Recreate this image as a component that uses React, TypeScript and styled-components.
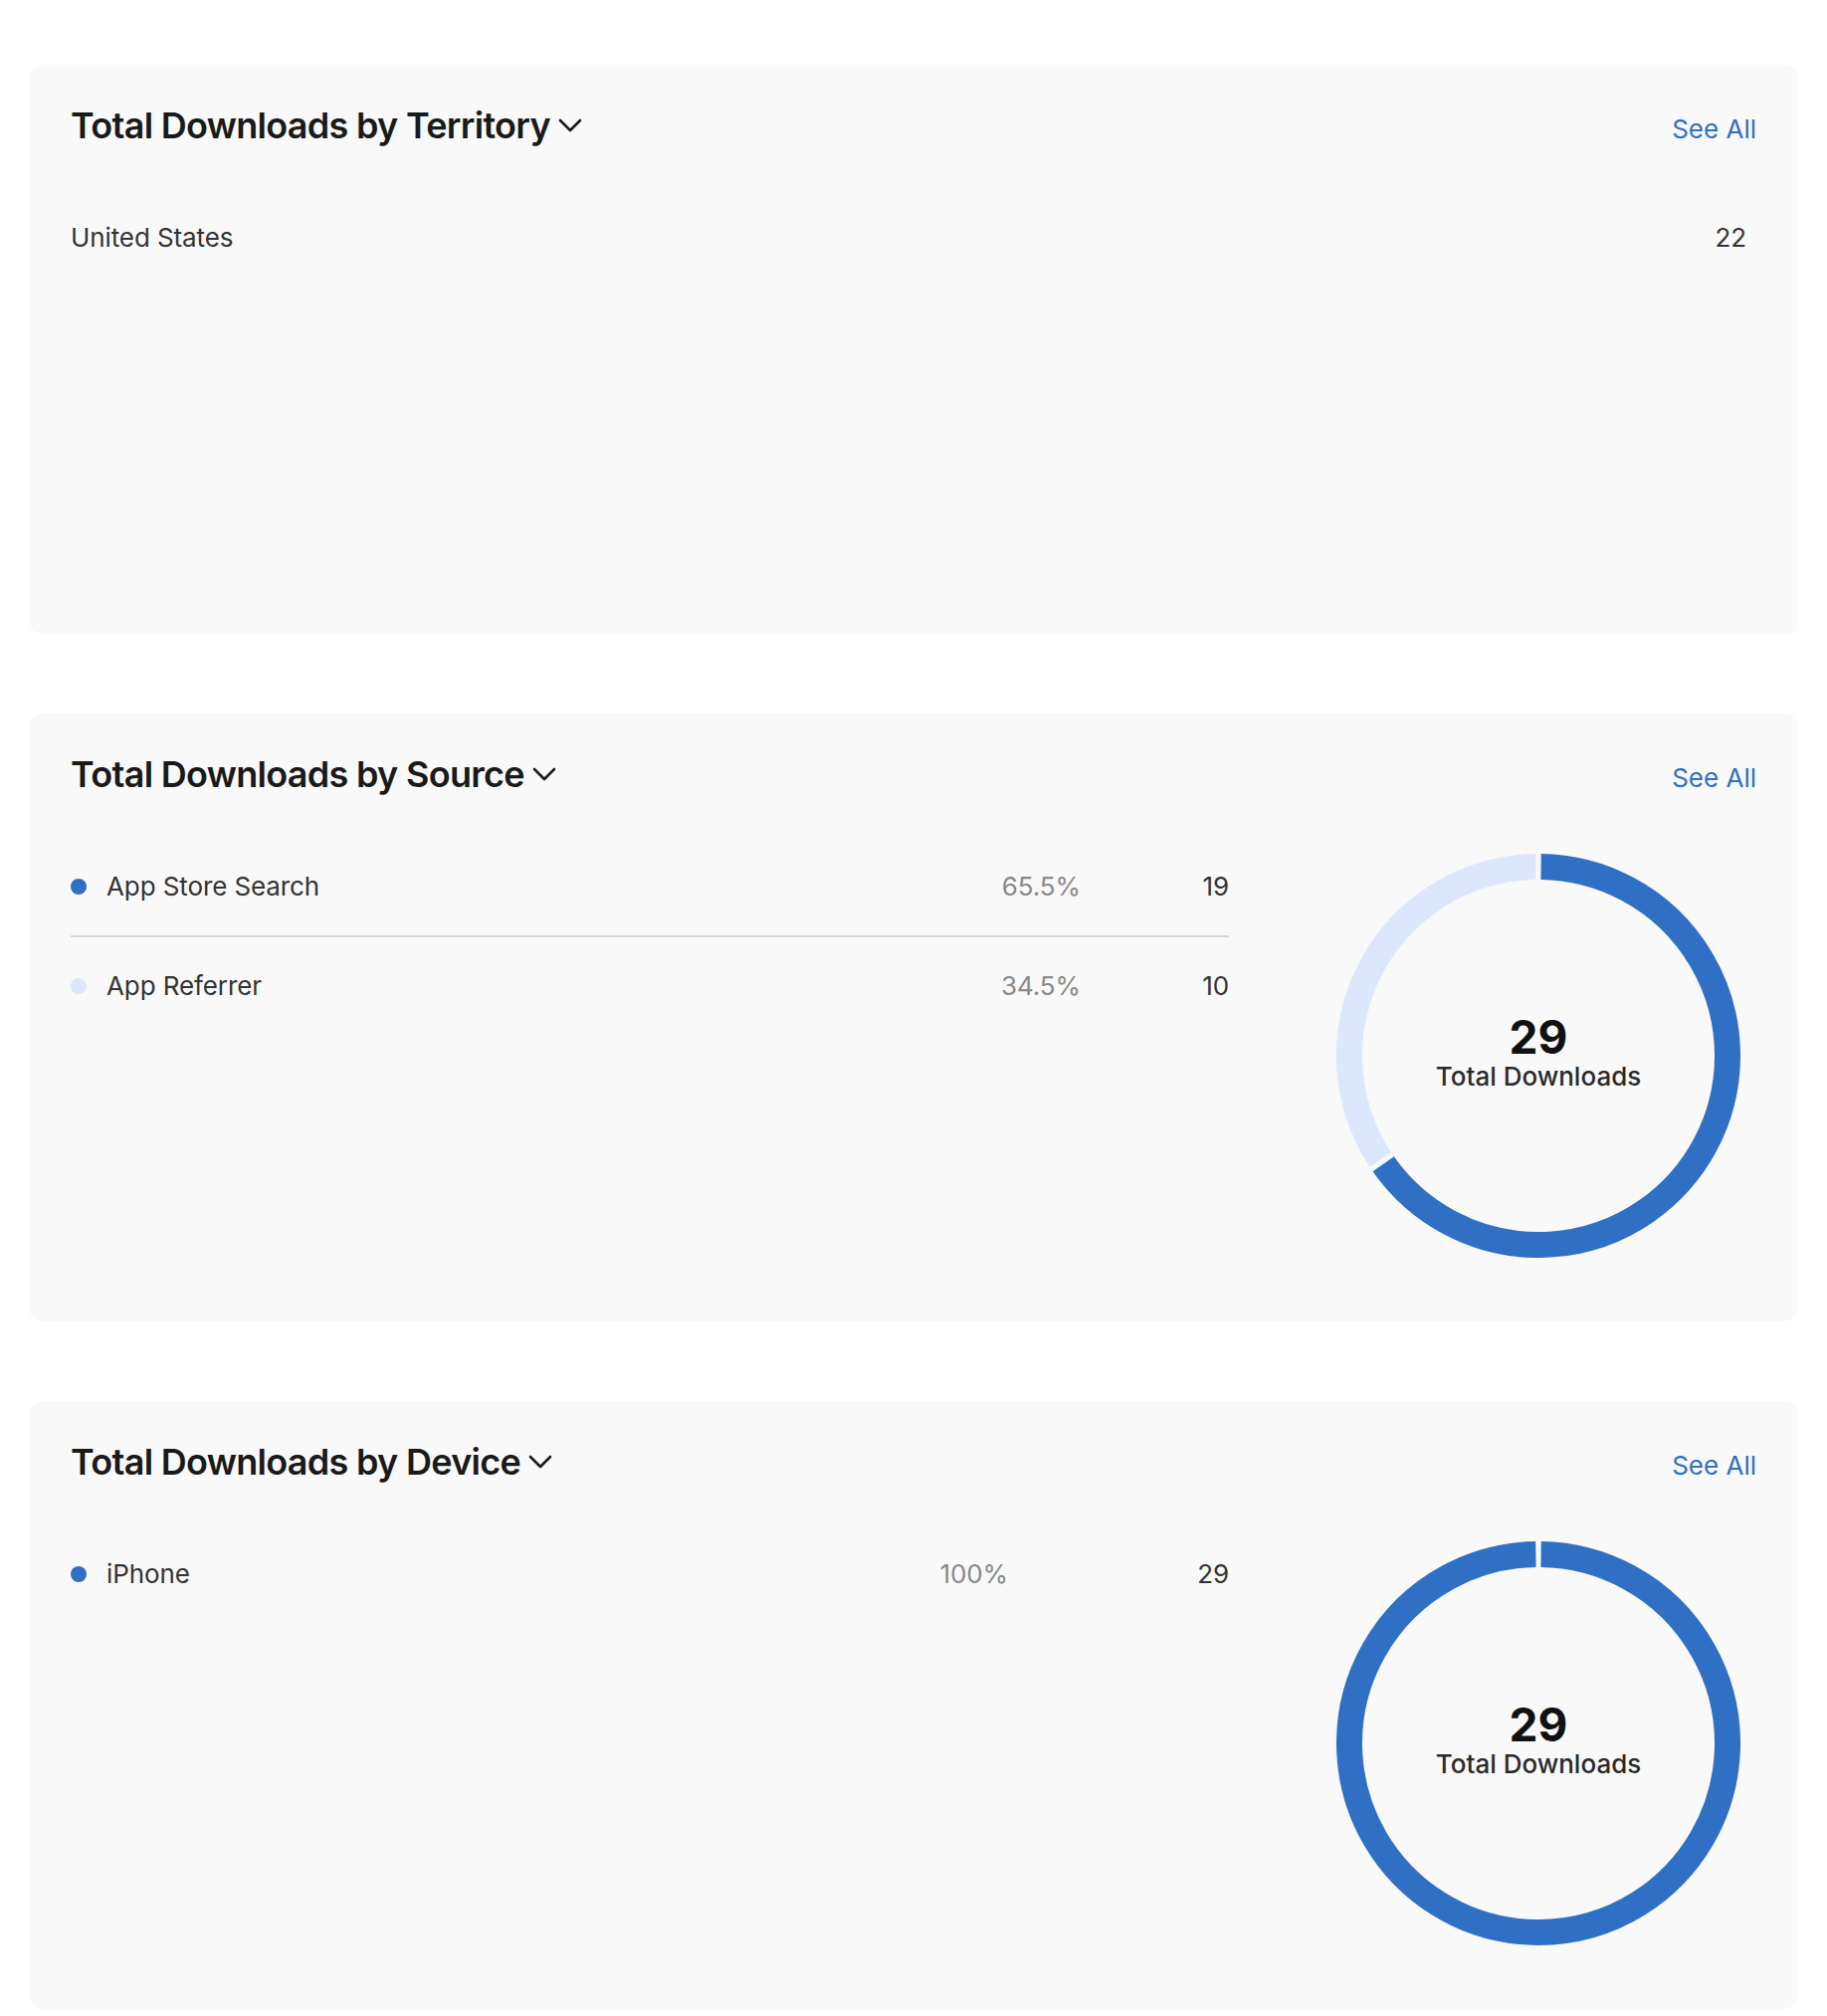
import React from "react";
import styled, { createGlobalStyle } from "styled-components";

const GlobalStyle = createGlobalStyle`
  html, body {
    margin: 0;
    padding: 0;
    background: #ffffff;
  }
  body {
    font-family: Inter, "Noto Sans", "Liberation Sans", sans-serif;
    color: #333333;
    -webkit-font-smoothing: antialiased;
  }
`;

const Page = styled.main`
  display: flex;
  flex-direction: column;
  gap: 80px;
  padding: 65px 30px 6px;
`;

const Card = styled.section<{ $minHeight?: number }>`
  background: #f9f9f9;
  border-radius: 12px;
  padding: 39px 41px 64px;
  box-sizing: border-box;
  min-height: ${(p) => (p.$minHeight ? `${p.$minHeight}px` : "auto")};
  display: flex;
  flex-direction: column;
`;

const Header = styled.header`
  display: flex;
  justify-content: space-between;
  align-items: baseline;
`;

const TitleButton = styled.button`
  display: inline-flex;
  align-items: center;
  gap: 8px;
  border: 0;
  background: none;
  padding: 0;
  margin: 0;
  font-family: inherit;
  font-size: 36px;
  line-height: 44px;
  font-weight: 600;
  color: #1a1a1a;
  letter-spacing: -0.7px;
  cursor: pointer;
`;

const SeeAll = styled.a`
  font-size: 26px;
  line-height: 32px;
  color: #2f6fc4;
  text-decoration: none;
  cursor: pointer;
`;

const Body = styled.div<{ $withChart: boolean }>`
  margin-top: 42px;
  display: grid;
  grid-template-columns: ${(p) => (p.$withChart ? "1fr 406px" : "1fr")};
  column-gap: 108px;
  padding-right: ${(p) => (p.$withChart ? 16 : 10)}px;
  align-items: start;
`;

const List = styled.div`
  display: flex;
  flex-direction: column;
`;

const Row = styled.div<{ $countWidth: number; $withPct: boolean }>`
  display: grid;
  grid-template-columns: ${(p) =>
    p.$withPct ? `1fr auto ${p.$countWidth}px` : "1fr auto"};
  align-items: center;
  padding: 33px 0;
  font-size: 26px;
  line-height: 32px;
  letter-spacing: -0.1px;
  border-bottom: 2px solid #d6d6d6;
  &:last-child {
    border-bottom: 0;
  }
`;

const Label = styled.div`
  display: flex;
  align-items: center;
  gap: 20px;
  color: #333333;
`;

const Dot = styled.span<{ $color: string }>`
  width: 16px;
  height: 16px;
  border-radius: 50%;
  background: ${(p) => p.$color};
  flex: none;
`;

const Pct = styled.div`
  color: #8a8a8a;
  text-align: right;
`;

const Count = styled.div`
  color: #333333;
  text-align: right;
`;

const ChartWrap = styled.div`
  position: relative;
  width: 406px;
  height: 406px;
  margin-top: 16px;
`;

const ChartCenter = styled.div`
  position: absolute;
  inset: 0;
  display: flex;
  flex-direction: column;
  align-items: center;
  justify-content: center;
`;

const BigNumber = styled.div`
  font-size: 46px;
  line-height: 42px;
  font-weight: 700;
  color: #111111;
`;

const CenterLabel = styled.div`
  font-size: 26px;
  line-height: 38px;
  font-weight: 500;
  color: #2b2b2b;
`;

const Chevron = () => (
  <svg width="24" height="14" viewBox="0 0 24 14" fill="none" aria-hidden>
    <polyline
      points="2,2 12,12 22,2"
      stroke="#1a1a1a"
      strokeWidth="2.6"
      strokeLinecap="round"
      strokeLinejoin="round"
    />
  </svg>
);

type Item = { label: string; pct?: string; count: number; color?: string };

const DARK = "#2f6fc4";
const LIGHT = "#dce6fd";

const Donut: React.FC<{ segments: { value: number; color: string }[] }> = ({
  segments,
}) => {
  const size = 406;
  const c = size / 2;
  const r = 190;
  const half = 2.6 / r;
  const total = segments.reduce((s, x) => s + x.value, 0);
  let acc = 0;
  const pt = (a: number) => [c + r * Math.sin(a), c - r * Math.cos(a)];
  return (
    <svg width={size} height={size} viewBox={`0 0 ${size} ${size}`}>
      {segments.map((seg, i) => {
        const start = (acc / total) * Math.PI * 2 + half;
        acc += seg.value;
        const end = (acc / total) * Math.PI * 2 - half;
        const [x1, y1] = pt(start);
        const [x2, y2] = pt(end);
        const large = end - start > Math.PI ? 1 : 0;
        return (
          <path
            key={i}
            d={`M ${x1} ${y1} A ${r} ${r} 0 ${large} 1 ${x2} ${y2}`}
            stroke={seg.color}
            strokeWidth={26}
            fill="none"
          />
        );
      })}
    </svg>
  );
};

const Panel: React.FC<{
  title: string;
  items: Item[];
  chart?: { value: number; color: string }[];
  total?: number;
  countWidth?: number;
  minHeight?: number;
}> = ({ title, items, chart, total, countWidth = 149, minHeight }) => {
  const withPct = items.some((i) => i.pct);
  return (
    <Card $minHeight={minHeight}>
      <Header>
        <TitleButton>
          {title}
          <Chevron />
        </TitleButton>
        <SeeAll>See All</SeeAll>
      </Header>
      <Body $withChart={!!chart}>
        <List>
          {items.map((it) => (
            <Row key={it.label} $countWidth={countWidth} $withPct={withPct}>
              <Label>
                {it.color && <Dot $color={it.color} />}
                {it.label}
              </Label>
              {withPct && <Pct>{it.pct}</Pct>}
              <Count>{it.count}</Count>
            </Row>
          ))}
        </List>
        {chart && (
          <ChartWrap>
            <Donut segments={chart} />
            <ChartCenter>
              <BigNumber>{total}</BigNumber>
              <CenterLabel>Total Downloads</CenterLabel>
            </ChartCenter>
          </ChartWrap>
        )}
      </Body>
    </Card>
  );
};

export default function App() {
  return (
    <>
      <GlobalStyle />
      <Page>
        <Panel
          title="Total Downloads by Territory"
          items={[{ label: "United States", count: 22 }]}
          minHeight={572}
        />
        <Panel
          title="Total Downloads by Source"
          items={[
            { label: "App Store Search", pct: "65.5%", count: 19, color: DARK },
            { label: "App Referrer", pct: "34.5%", count: 10, color: LIGHT },
          ]}
          chart={[
            { value: 19, color: DARK },
            { value: 10, color: LIGHT },
          ]}
          total={29}
          countWidth={149}
        />
        <Panel
          title="Total Downloads by Device"
          items={[{ label: "iPhone", pct: "100%", count: 29, color: DARK }]}
          chart={[{ value: 29, color: DARK }]}
          total={29}
          countWidth={222}
        />
      </Page>
    </>
  );
}
